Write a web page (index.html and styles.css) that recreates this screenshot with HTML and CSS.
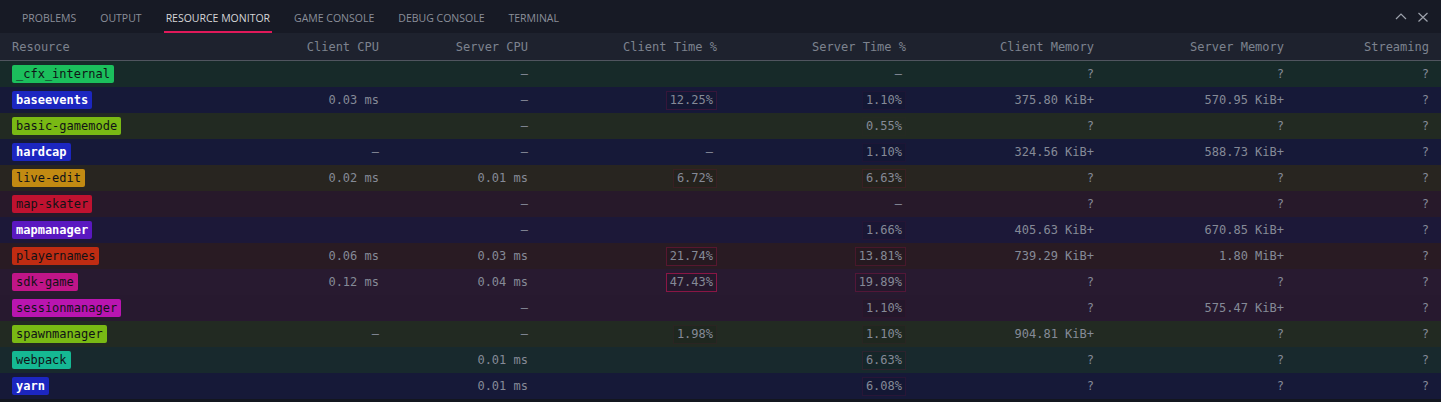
FILE: index.html
```html
<!DOCTYPE html>
<html lang="en">
<head>
<meta charset="utf-8">
<title>Resource Monitor</title>
<link rel="stylesheet" href="styles.css">
</head>
<body>
<div class="panel">
  <div class="tabbar">
    <div class="tabs">
      <div class="tab">PROBLEMS</div>
      <div class="tab">OUTPUT</div>
      <div class="tab active">RESOURCE MONITOR</div>
      <div class="tab">GAME CONSOLE</div>
      <div class="tab">DEBUG CONSOLE</div>
      <div class="tab">TERMINAL</div>
    </div>
    <div class="actions">
      <svg class="icon" viewBox="0 0 16 16" width="16" height="16"><polyline points="3,10 8,5 13,10" fill="none" stroke="currentColor" stroke-width="1.2"/></svg>
      <svg class="icon" viewBox="0 0 16 16" width="16" height="16"><path d="M3.5 4 L12.5 12.5 M12.5 4 L3.5 12.5" fill="none" stroke="currentColor" stroke-width="1.2"/></svg>
    </div>
  </div>

  <div class="table">
    <div class="row head">
      <div class="cell name">Resource</div>
      <div class="cell">Client CPU</div>
      <div class="cell">Server CPU</div>
      <div class="cell">Client Time %</div>
      <div class="cell">Server Time %</div>
      <div class="cell">Client Memory</div>
      <div class="cell">Server Memory</div>
      <div class="cell">Streaming</div>
    </div>

    <div class="row r-green">
      <div class="cell name"><span class="badge">_cfx_internal</span></div>
      <div class="cell"></div>
      <div class="cell">—</div>
      <div class="cell"></div>
      <div class="cell"><span class="pct" style="--a:0">—</span></div>
      <div class="cell">?</div>
      <div class="cell">?</div>
      <div class="cell">?</div>
    </div>

    <div class="row r-blue">
      <div class="cell name"><span class="badge light">baseevents</span></div>
      <div class="cell">0.03 ms</div>
      <div class="cell">—</div>
      <div class="cell"><span class="pct filled" style="--a:.17">12.25%</span></div>
      <div class="cell"><span class="pct filled" style="--a:.05">1.10%</span></div>
      <div class="cell">375.80 KiB+</div>
      <div class="cell">570.95 KiB+</div>
      <div class="cell">?</div>
    </div>

    <div class="row r-lime">
      <div class="cell name"><span class="badge">basic-gamemode</span></div>
      <div class="cell"></div>
      <div class="cell">—</div>
      <div class="cell"></div>
      <div class="cell"><span class="pct" style="--a:.02">0.55%</span></div>
      <div class="cell">?</div>
      <div class="cell">?</div>
      <div class="cell">?</div>
    </div>

    <div class="row r-blue">
      <div class="cell name"><span class="badge light">hardcap</span></div>
      <div class="cell">—</div>
      <div class="cell">—</div>
      <div class="cell"><span class="pct" style="--a:0">—</span></div>
      <div class="cell"><span class="pct filled" style="--a:.05">1.10%</span></div>
      <div class="cell">324.56 KiB+</div>
      <div class="cell">588.73 KiB+</div>
      <div class="cell">?</div>
    </div>

    <div class="row r-gold">
      <div class="cell name"><span class="badge">live-edit</span></div>
      <div class="cell">0.02 ms</div>
      <div class="cell">0.01 ms</div>
      <div class="cell"><span class="pct filled" style="--a:.11">6.72%</span></div>
      <div class="cell"><span class="pct filled" style="--a:.11">6.63%</span></div>
      <div class="cell">?</div>
      <div class="cell">?</div>
      <div class="cell">?</div>
    </div>

    <div class="row r-red">
      <div class="cell name"><span class="badge">map-skater</span></div>
      <div class="cell"></div>
      <div class="cell">—</div>
      <div class="cell"></div>
      <div class="cell"><span class="pct" style="--a:0">—</span></div>
      <div class="cell">?</div>
      <div class="cell">?</div>
      <div class="cell">?</div>
    </div>

    <div class="row r-purple">
      <div class="cell name"><span class="badge light">mapmanager</span></div>
      <div class="cell"></div>
      <div class="cell">—</div>
      <div class="cell"></div>
      <div class="cell"><span class="pct filled" style="--a:.06">1.66%</span></div>
      <div class="cell">405.63 KiB+</div>
      <div class="cell">670.85 KiB+</div>
      <div class="cell">?</div>
    </div>

    <div class="row r-orange">
      <div class="cell name"><span class="badge">playernames</span></div>
      <div class="cell">0.06 ms</div>
      <div class="cell">0.03 ms</div>
      <div class="cell"><span class="pct filled" style="--a:.27">21.74%</span></div>
      <div class="cell"><span class="pct filled" style="--a:.19">13.81%</span></div>
      <div class="cell">739.29 KiB+</div>
      <div class="cell">1.80 MiB+</div>
      <div class="cell">?</div>
    </div>

    <div class="row r-magenta">
      <div class="cell name"><span class="badge">sdk-game</span></div>
      <div class="cell">0.12 ms</div>
      <div class="cell">0.04 ms</div>
      <div class="cell"><span class="pct filled" style="--a:.54">47.43%</span></div>
      <div class="cell"><span class="pct filled" style="--a:.25">19.89%</span></div>
      <div class="cell">?</div>
      <div class="cell">?</div>
      <div class="cell">?</div>
    </div>

    <div class="row r-violet">
      <div class="cell name"><span class="badge">sessionmanager</span></div>
      <div class="cell"></div>
      <div class="cell">—</div>
      <div class="cell"></div>
      <div class="cell"><span class="pct filled" style="--a:.05">1.10%</span></div>
      <div class="cell">?</div>
      <div class="cell">575.47 KiB+</div>
      <div class="cell">?</div>
    </div>

    <div class="row r-lime">
      <div class="cell name"><span class="badge">spawnmanager</span></div>
      <div class="cell">—</div>
      <div class="cell">—</div>
      <div class="cell"><span class="pct filled" style="--a:.06">1.98%</span></div>
      <div class="cell"><span class="pct filled" style="--a:.05">1.10%</span></div>
      <div class="cell">904.81 KiB+</div>
      <div class="cell">?</div>
      <div class="cell">?</div>
    </div>

    <div class="row r-teal">
      <div class="cell name"><span class="badge">webpack</span></div>
      <div class="cell"></div>
      <div class="cell">0.01 ms</div>
      <div class="cell"></div>
      <div class="cell"><span class="pct filled" style="--a:.11">6.63%</span></div>
      <div class="cell">?</div>
      <div class="cell">?</div>
      <div class="cell">?</div>
    </div>

    <div class="row r-blue">
      <div class="cell name"><span class="badge light">yarn</span></div>
      <div class="cell"></div>
      <div class="cell">0.01 ms</div>
      <div class="cell"></div>
      <div class="cell"><span class="pct filled" style="--a:.10">6.08%</span></div>
      <div class="cell">?</div>
      <div class="cell">?</div>
      <div class="cell">?</div>
    </div>
  </div>
</div>
</body>
</html>
```

FILE: styles.css
```css
* { box-sizing: border-box; }

html, body {
  margin: 0;
  padding: 0;
  background: #13161f;
}

.panel {
  width: 1441px;
  height: 402px;
  background: #13161f;
  overflow: hidden;
}

.tabbar {
  height: 33px;
  background: #171a25;
  display: flex;
  justify-content: space-between;
  align-items: stretch;
}

.tabs {
  display: flex;
  gap: 20px;
  padding-left: 20px;
}

.tab {
  display: flex;
  align-items: center;
  padding: 3px 2px 0;
  font-family: "Open Sans", "Noto Sans", sans-serif;
  font-size: 10.5px;
  color: #8b8f9a;
  white-space: nowrap;
}

.tab.active {
  color: #d6d6d8;
  box-shadow: inset 0 -2px 0 #e0195a;
}

.actions {
  display: flex;
  align-items: center;
  gap: 6px;
  padding-right: 10px;
  color: #9da2ac;
}

.icon { display: block; }

.table {
  font-family: "DejaVu Sans Mono", "Liberation Mono", monospace;
  font-size: 12px;
  color: #858a97;
}

.row {
  display: grid;
  grid-template-columns: 218px 149px 149px 189px 189px 188px 190px 145px;
  padding: 0 12px;
  height: 26px;
  align-items: center;
}

.row.head {
  height: 28px;
  background: #1e222e;
  border-bottom: 1px solid #50555f;
  color: #7d828e;
}

.cell {
  text-align: right;
  white-space: nowrap;
}

.cell.name { text-align: left; }

.badge {
  display: inline-block;
  height: 18px;
  line-height: 18px;
  padding: 0 4px;
  border-radius: 2px;
  color: #101216;
  vertical-align: middle;
}

.badge.light {
  color: #ffffff;
  font-weight: bold;
}

.pct {
  display: inline-block;
  line-height: 17px;
  padding: 0 3px;
  border: 1px solid rgba(224, 20, 90, var(--a));
  vertical-align: middle;
}

.pct.filled { background: rgba(0, 0, 0, 0.07); }

.r-green  { background: #172a29; }
.r-green .badge  { background: #1bbf5c; }

.r-blue   { background: #161938; }
.r-blue .badge   { background: #1c26c0; }

.r-lime   { background: #222a22; }
.r-lime .badge   { background: #79b914; }

.r-gold   { background: #282520; }
.r-gold .badge   { background: #c28a12; }

.r-red    { background: #27192a; }
.r-red .badge    { background: #bf1230; }

.r-purple { background: #1c1838; }
.r-purple .badge { background: #5a18c0; }

.r-orange { background: #291b23; }
.r-orange .badge { background: #bf2c12; }

.r-magenta { background: #281a30; }
.r-magenta .badge { background: #c01588; }

.r-violet { background: #27192f; }
.r-violet .badge { background: #b915b0; }

.r-teal   { background: #18292d; }
.r-teal .badge   { background: #15b893; }
```
